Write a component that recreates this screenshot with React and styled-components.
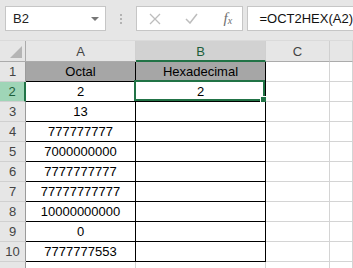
import React from "react";
import styled, { createGlobalStyle } from "styled-components";

const GlobalStyle = createGlobalStyle`
  html, body {
    margin: 0;
    padding: 0;
    background: #ffffff;
    font-family: "Liberation Sans", Arial, sans-serif;
    overflow: hidden;
  }
`;

const GREEN = "#217346";

const Page = styled.div`
  width: 353px;
  height: 268px;
  overflow: hidden;
`;

const FormulaBar = styled.div`
  height: 41px;
  box-sizing: border-box;
  background: #e6e6e6;
  border-bottom: 1px solid #dadada;
  display: flex;
  align-items: flex-start;
  padding: 6px 0 0 5px;
`;

const NameBox = styled.div`
  width: 102px;
  height: 25px;
  box-sizing: border-box;
  background: #fff;
  border: 1px solid #c6c6c6;
  display: flex;
  align-items: center;
  justify-content: space-between;
  padding: 0 6px 0 7px;
  font-size: 13px;
  color: #222;
`;

const Caret = styled.span`
  width: 0;
  height: 0;
  border-left: 4px solid transparent;
  border-right: 4px solid transparent;
  border-top: 4px solid #777;
`;

const Grip = styled.div`
  width: 30px;
  height: 25px;
  display: flex;
  flex-direction: column;
  align-items: center;
  justify-content: center;
  gap: 2px;
  span {
    width: 2px;
    height: 2px;
    background: #b3b3b3;
  }
`;

const ButtonBox = styled.div`
  width: 109px;
  height: 25px;
  box-sizing: border-box;
  background: #fff;
  border: 1px solid #c6c6c6;
  display: flex;
  align-items: center;
  padding-left: 12px;
  gap: 24px;
`;

const Fx = styled.span`
  font-family: "Liberation Serif", "Times New Roman", serif;
  font-style: italic;
  font-size: 15px;
  color: #6f6f6f;
  margin-left: 2px;
  sub {
    font-size: 10px;
    vertical-align: 0;
    position: relative;
    top: 1px;
  }
`;

const FormulaInput = styled.div`
  margin-left: 4px;
  flex: 1;
  height: 25px;
  box-sizing: border-box;
  background: #fff;
  border: 1px solid #c6c6c6;
  border-right: none;
  display: flex;
  align-items: center;
  padding-left: 11px;
  font-size: 13px;
  color: #111;
  white-space: nowrap;
`;

const Sheet = styled.div`
  display: grid;
  grid-template-columns: 26px 110px 130px 64px 1fr;
  grid-template-rows: 21px;
  grid-auto-rows: 20px;
  font-size: 13px;
`;

const Corner = styled.div`
  background: #e6e6e6;
  border-right: 1px solid #ababab;
  border-bottom: 1px solid #ababab;
  box-sizing: border-box;
  display: flex;
  align-items: flex-end;
  justify-content: flex-end;
  padding: 0 3px 3px 0;
  &::after {
    content: "";
    width: 0;
    height: 0;
    border-left: 12px solid transparent;
    border-bottom: 12px solid #b5b5b5;
  }
`;

const ColHead = styled.div`
  box-sizing: border-box;
  background: ${(p) => (p.$active ? "#d2d2d2" : "#e6e6e6")};
  color: ${(p) => (p.$active ? "#1d5e3a" : "#444")};
  border-right: 1px solid #d0d0d0;
  border-bottom: ${(p) => (p.$active ? `2px solid ${GREEN}` : "1px solid #ababab")};
  display: flex;
  align-items: center;
  justify-content: center;
  padding-top: 1px;
`;

const RowHead = styled.div`
  box-sizing: border-box;
  background: ${(p) => (p.$active ? "#9fd5b7" : "#e6e6e6")};
  color: ${(p) => (p.$active ? "#1d5e3a" : "#444")};
  border-bottom: 1px solid #d0d0d0;
  border-right: ${(p) => (p.$active ? `2px solid ${GREEN}` : "1px solid #9b9b9b")};
  display: flex;
  align-items: center;
  justify-content: center;
`;

const Cell = styled.div`
  position: relative;
  box-sizing: border-box;
  background: ${(p) => (p.$fill ? "#a6a6a6" : "#fff")};
  border-right: 1px solid ${(p) => (p.$boxed ? "#000" : "#d4d4d4")};
  border-bottom: 1px solid ${(p) => (p.$boxed ? "#000" : "#d4d4d4")};
  display: flex;
  align-items: center;
  justify-content: center;
  color: #000;
  white-space: nowrap;
`;

const Selection = styled.div`
  position: absolute;
  top: -2px;
  left: -2px;
  right: 0;
  bottom: 0;
  border: 2px solid ${GREEN};
  pointer-events: none;
`;

const FillHandle = styled.div`
  position: absolute;
  right: -4px;
  bottom: -4px;
  width: 5px;
  height: 5px;
  background: ${GREEN};
  border: 1px solid #fff;
`;

const octals = [
  "2",
  "13",
  "777777777",
  "7000000000",
  "7777777777",
  "77777777777",
  "10000000000",
  "0",
  "7777777553",
];

const rows = [
  { n: 1, a: "Octal", b: "Hexadecimal", head: true },
  ...octals.map((v, i) => ({ n: i + 2, a: v, b: i === 0 ? "2" : "" })),
];

export default function App() {
  return (
    <Page>
      <GlobalStyle />
      <FormulaBar>
        <NameBox>
          B2
          <Caret />
        </NameBox>
        <Grip>
          <span />
          <span />
          <span />
        </Grip>
        <ButtonBox>
          <svg width="12" height="12" viewBox="0 0 12 12">
            <path d="M1 1 L11 11 M11 1 L1 11" stroke="#bdbdbd" strokeWidth="1.3" fill="none" />
          </svg>
          <svg width="13" height="11" viewBox="0 0 13 11">
            <path d="M1 6 L5 10 L12 1" stroke="#bdbdbd" strokeWidth="1.5" fill="none" />
          </svg>
          <Fx>
            f<sub>x</sub>
          </Fx>
        </ButtonBox>
        <FormulaInput>=OCT2HEX(A2)</FormulaInput>
      </FormulaBar>
      <Sheet>
        <Corner />
        <ColHead>A</ColHead>
        <ColHead $active>B</ColHead>
        <ColHead>C</ColHead>
        <ColHead />
        {rows.map((r) => (
          <React.Fragment key={r.n}>
            <RowHead $active={r.n === 2}>{r.n}</RowHead>
            <Cell $boxed $fill={r.head}>{r.a}</Cell>
            <Cell $boxed $fill={r.head}>
              {r.b}
              {r.n === 2 && (
                <Selection>
                  <FillHandle />
                </Selection>
              )}
            </Cell>
            <Cell />
            <Cell />
          </React.Fragment>
        ))}
        <RowHead />
        <Cell />
        <Cell />
        <Cell />
        <Cell />
      </Sheet>
    </Page>
  );
}
